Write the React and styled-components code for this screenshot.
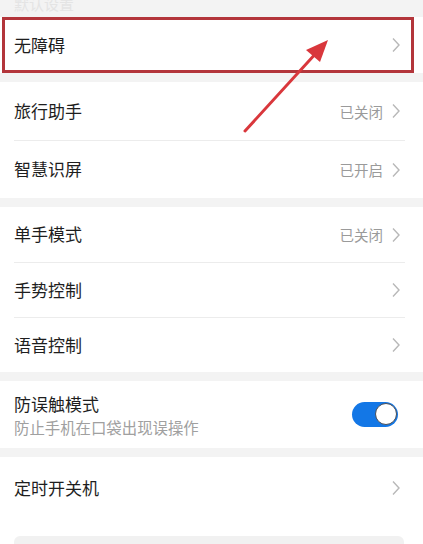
import styled, { createGlobalStyle } from 'styled-components';

const GlobalStyle = createGlobalStyle`
  html, body {
    margin: 0;
    padding: 0;
    background: #f3f3f3;
  }
  body {
    font-family: "Noto Sans CJK SC", "Noto Sans", sans-serif;
  }
`;

const sections = [
  {
    items: [
      { title: '旅行助手', status: '已关闭' },
      { title: '智慧识屏', status: '已开启' },
    ],
    rowHeight: 58,
  },
  {
    items: [
      { title: '单手模式', status: '已关闭' },
      { title: '手势控制' },
      { title: '语音控制' },
    ],
    rowHeight: 55,
  },
];

const Chevron = () => (
  <svg width="10" height="16" viewBox="0 0 10 16">
    <path d="M2 1.5 L8 8 L2 14.5" fill="none" stroke="#b8b8b8" strokeWidth="1.4" />
  </svg>
);

const App = () => {
  return (
    <Page>
      <GlobalStyle />
      <TopStrip>
        <Faded>默认设置</Faded>
      </TopStrip>

      <Section>
        <Highlight>
          <HighlightRow>
            <Title>无障碍</Title>
            <Right>
              <Chevron />
            </Right>
          </HighlightRow>
        </Highlight>
      </Section>

      {sections.map((sec, i) => (
        <Section key={i}>
          {sec.items.map((item, j) => (
            <Row key={item.title} height={sec.rowHeight} divider={j > 0}>
              <Title>{item.title}</Title>
              <Right>
                {item.status && <Status>{item.status}</Status>}
                <Chevron />
              </Right>
            </Row>
          ))}
        </Section>
      ))}

      <Section>
        <Row height={67}>
          <TextStack>
            <Title>防误触模式</Title>
            <Sub>防止手机在口袋出现误操作</Sub>
          </TextStack>
          <Toggle>
            <Knob />
          </Toggle>
        </Row>
      </Section>

      <LastSection>
        <Row height={62}>
          <Title>定时开关机</Title>
          <Right>
            <Chevron />
          </Right>
        </Row>
        <BottomCard />
      </LastSection>

      <Arrow width="423" height="544" viewBox="0 0 423 544">
        <line x1="245" y1="131" x2="318" y2="51" stroke="#d9373c" strokeWidth="3" strokeLinecap="round" />
        <polygon points="328,40 306,50 320,62" fill="#d9373c" />
      </Arrow>
    </Page>
  );
};

export default App;

const Page = styled.div`
  position: relative;
  width: 423px;
  height: 544px;
  overflow: hidden;
  background: #f3f3f3;
`;

const TopStrip = styled.div`
  height: 15px;
  display: flex;
  align-items: flex-end;
  padding: 0 14px;
  overflow: hidden;
`;

const Faded = styled.span`
  font-size: 15px;
  color: #e4e4e4;
  line-height: 1;
  transform: translateY(-4px);
`;

const Section = styled.div`
  background: #fff;
  margin-bottom: 9px;
`;

const LastSection = styled(Section)`
  margin-bottom: 0;
  padding-bottom: 30px;
`;

const Highlight = styled.div`
  margin: 2px 9px 0 2px;
  border: 3px solid #b3353b;
`;

const Row = styled.div`
  height: ${(p) => p.height || 56}px;
  margin: 0 18px 0 14px;
  display: flex;
  align-items: center;
  justify-content: space-between;
  border-top: ${(p) => (p.divider ? '1px solid #ececec' : 'none')};
  box-sizing: border-box;
`;

const HighlightRow = styled(Row)`
  height: 50px;
  margin: 0 6px 0 9px;
`;

const Title = styled.div`
  font-size: 17px;
  color: #1e1e1e;
  line-height: 1.2;
`;

const Right = styled.div`
  display: flex;
  align-items: center;
  gap: 8px;
  padding-right: 4px;
`;

const Status = styled.span`
  font-size: 14.5px;
  color: #9a9a9a;
`;

const TextStack = styled.div`
  display: flex;
  flex-direction: column;
  gap: 4px;
  padding-top: 2px;
`;

const Sub = styled.div`
  font-size: 15.4px;
  color: #a0a0a0;
  line-height: 1.2;
`;

const Toggle = styled.div`
  width: 46px;
  height: 25px;
  border-radius: 13px;
  background: #1377e6;
  position: relative;
  margin-right: 7px;
`;

const Knob = styled.div`
  position: absolute;
  right: 1px;
  top: 1px;
  width: 20px;
  height: 20px;
  border-radius: 50%;
  background: #fff;
  border: 1.5px solid #4a4f58;
`;

const BottomCard = styled.div`
  margin: 17px 19px 0 14px;
  height: 30px;
  border-radius: 6px;
  background: #f1f1f1;
`;

const Arrow = styled.svg`
  position: absolute;
  left: 0;
  top: 0;
  pointer-events: none;
`;
